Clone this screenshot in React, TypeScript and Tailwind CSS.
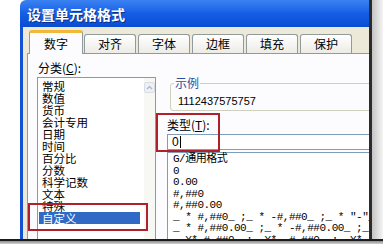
const cats = ["常规", "数值", "货币", "会计专用", "日期", "时间", "百分比", "分数", "科学记数", "文本", "特殊", "自定义"];
const tabs = ["对齐", "字体", "边框", "填充", "保护"];
const formats = [
  "G/通用格式",
  "0",
  "0.00",
  "#,##0",
  "#,##0.00",
  '_ * #,##0_ ;_ * -#,##0_ ;_ * "-"_ ;_ @_ ',
  '_ * #,##0.00_ ;_ * -#,##0.00_ ;_ * "-"??_ ;_ @_ ',
  '_ ¥* #,##0_ ;_ ¥* -#,##0_ ;_ ¥* "-"_ ;_ @_ ',
];

const cjk = "font-['Noto_Sans_CJK_SC','Noto_Sans',sans-serif]";

export default function App() {
  return (
    <div className={`relative w-[383px] h-[244px] overflow-hidden bg-white ${cjk} text-black`}>
      <div className="flex h-[239px]">
        <div className="w-[20px] shrink-0" />
        {/* window */}
        <div className="w-[352px] shrink-0 flex flex-col border-r-[3px] border-[#2b2b2b]">
          <div className="h-[27px] shrink-0 rounded-tl-[6px] bg-gradient-to-b from-[#3b82f2] via-[#145ee6] to-[#0a4cd2] flex items-center pl-[7px]">
            <span className="text-[14px] font-bold leading-none text-white [text-shadow:1px_1px_0_#0a2f8a]">
              设置单元格格式
            </span>
          </div>
          <div className="flex-1 min-h-0 flex border-l-[3px] border-[#1452d4] bg-[#ece9d8]">
            <div className="flex-1 min-w-0 flex flex-col pl-[4px] pt-[3px]">
              {/* tabs */}
              <div className="h-[24px] shrink-0 flex items-end pl-[2px] relative z-10">
                <div className="w-[54px] h-[24px] flex items-center justify-center bg-[#fcfcfe] border-x border-[#919b9c] border-t-[3px] border-t-[#f2b838] rounded-t-[3px] text-[12px] leading-none">
                  数字
                </div>
                <div className="flex gap-[2px] ml-[1px] mb-[1px]">
                  {tabs.map((t) => (
                    <div
                      key={t}
                      className="w-[52px] h-[19px] flex items-center justify-center bg-gradient-to-b from-white to-[#ecebe5] border border-b-0 border-[#919b9c] rounded-t-[3px] text-[12px] leading-none"
                    >
                      {t}
                    </div>
                  ))}
                </div>
              </div>
              {/* panel */}
              <div className="-mt-px flex-1 min-h-0 overflow-hidden bg-[#fcfcfe] border-l border-t border-[#919b9c] flex pt-[7px] pl-[9px]">
                {/* left column */}
                <div className="w-[119px] shrink-0 flex flex-col">
                  <div className="pl-[1px] text-[12px] leading-[14px] h-[14px] whitespace-nowrap">
                    分类(<span className="underline">C</span>):
                  </div>
                  <div className="mt-[2px] flex-1 flex border border-b-0 border-[#7f9db9] bg-white">
                    <div className="flex-1 flex flex-col pt-[2px]">
                      {cats.map((c, i) => (
                        <div
                          key={c}
                          className={
                            "ml-[1px] mr-[4px] pl-[3px] h-[12px] text-[11.5px] leading-[12px] whitespace-nowrap " +
                            (i === cats.length - 1 ? "bg-[#316ac5] text-white" : "")
                          }
                        >
                          {c}
                        </div>
                      ))}
                    </div>
                    <div className="w-[11px] shrink-0 bg-[#f7f7f3] flex flex-col">
                      <div className="mt-[4px] h-[11px] bg-[#eef0f4] border border-[#d7dce6] rounded-[2px] flex items-center justify-center">
                        <svg width="7" height="5" viewBox="0 0 7 5">
                          <path d="M1 4 L3.5 1.5 L6 4" fill="none" stroke="#a9b2c0" strokeWidth="1.2" />
                        </svg>
                      </div>
                    </div>
                  </div>
                </div>
                {/* right column */}
                <div className="ml-[11px] flex-1 min-w-[210px] flex flex-col">
                  <fieldset className="mt-[16px] ml-[3px] border border-[#d0d0bf] rounded-[3px] pl-[3px] pb-[3px]">
                    <legend className="px-[1px] text-[12px] leading-[12px] text-[#2b4f9e]">示例</legend>
                    <div className="mt-[6px] pl-[4px] text-[11px] leading-[12px] font-['Liberation_Sans',sans-serif]">
                      1112437575757
                    </div>
                  </fieldset>
                  <div className="mt-[8px] text-[12px] leading-[12px] whitespace-nowrap">
                    类型(<span className="underline">T</span>):
                  </div>
                  <div className="mt-[3px] h-[16px] shrink-0 border border-[#7f9db9] bg-white flex items-center pl-[4px] text-[12px] leading-none font-['Liberation_Sans',sans-serif]">
                    0<span className="ml-[1px] w-px h-[12px] bg-black" />
                  </div>
                  <div className="mt-[2px] flex-1 border border-b-0 border-[#7f9db9] bg-white pl-[5px] pt-[1px] flex flex-col">
                    {formats.map((f, i) => (
                      <div
                        key={i}
                        className="h-[11.5px] shrink-0 text-[11px] leading-[11.5px] tracking-[-0.5px] whitespace-pre font-['Liberation_Mono','Noto_Sans_CJK_SC',monospace]"
                      >
                        {f}
                      </div>
                    ))}
                  </div>
                </div>
              </div>
            </div>
          </div>
        </div>
        <div className="flex-1 bg-gradient-to-r from-[#c4c4c4] to-[#f5f5f5]" />
      </div>
      <div className="h-[2px] bg-[#1c1c1c]" />
      <div className="h-[3px] bg-gradient-to-b from-[#8d8d8d] to-[#d2d2d2]" />

      {/* red highlight boxes */}
      <div className="absolute left-[28px] top-[203px] w-[120px] h-[28px] border-2 border-[#b0202c]" />
      <div className="absolute left-[156px] top-[113px] w-[64px] h-[39px] border-2 border-[#b0202c]" />
    </div>
  );
}
